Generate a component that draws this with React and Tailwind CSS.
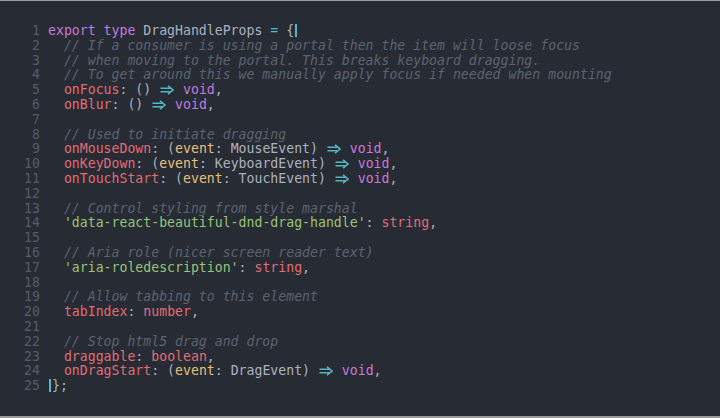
import React from "react";

const C = {
  kw: "text-[#c678dd]",
  plain: "text-[#abb2bf]",
  com: "text-[#5c6370] italic",
  prop: "text-[#e06c75]",
  str: "text-[#98c379]",
  param: "text-[#e5c07b]",
  op: "text-[#56b6c2]",
  punc: "text-[#abb2bf]",
};

const Arrow = () => (
  <span className="inline-block w-[2ch] align-[-1px]">
    <svg width="16" height="10" viewBox="0 0 16 10" className="block mx-auto" fill="none">
      <path d="M1.5 3.2H11.5M1.5 6.8H11.5" stroke="#56b6c2" strokeWidth="1.6" />
      <path d="M9 0.8L14 5L9 9.2" stroke="#56b6c2" strokeWidth="1.6" strokeLinejoin="miter" />
    </svg>
  </span>
);

const Bar = () => (
  <span className="inline-block w-[2px] h-[13px] bg-[#56b6c2] align-[-2px] mx-[1px]" />
);

const t = (cls, text) => ({ cls, text });

const lines = [
  [t("kw", "export type "), t("plain", "DragHandleProps "), t("op", "="), t("punc", " {"), "bar"],
  [t("com", "  // If a consumer is using a portal then the item will loose focus")],
  [t("com", "  // when moving to the portal. This breaks keyboard dragging.")],
  [t("com", "  // To get around this we manually apply focus if needed when mounting")],
  [t("plain", "  "), t("prop", "onFocus"), t("punc", ": () "), "arrow", t("punc", " "), t("kw", "void"), t("punc", ",")],
  [t("plain", "  "), t("prop", "onBlur"), t("punc", ": () "), "arrow", t("punc", " "), t("kw", "void"), t("punc", ",")],
  [],
  [t("com", "  // Used to initiate dragging")],
  [t("plain", "  "), t("prop", "onMouseDown"), t("punc", ": ("), t("param", "event"), t("punc", ": MouseEvent) "), "arrow", t("punc", " "), t("kw", "void"), t("punc", ",")],
  [t("plain", "  "), t("prop", "onKeyDown"), t("punc", ": ("), t("param", "event"), t("punc", ": KeyboardEvent) "), "arrow", t("punc", " "), t("kw", "void"), t("punc", ",")],
  [t("plain", "  "), t("prop", "onTouchStart"), t("punc", ": ("), t("param", "event"), t("punc", ": TouchEvent) "), "arrow", t("punc", " "), t("kw", "void"), t("punc", ",")],
  [],
  [t("com", "  // Control styling from style marshal")],
  [t("plain", "  "), t("str", "'data-react-beautiful-dnd-drag-handle'"), t("punc", ": "), t("prop", "string"), t("punc", ",")],
  [],
  [t("com", "  // Aria role (nicer screen reader text)")],
  [t("plain", "  "), t("str", "'aria-roledescription'"), t("punc", ": "), t("prop", "string"), t("punc", ",")],
  [],
  [t("com", "  // Allow tabbing to this element")],
  [t("plain", "  "), t("prop", "tabIndex"), t("punc", ": "), t("prop", "number"), t("punc", ",")],
  [],
  [t("com", "  // Stop html5 drag and drop")],
  [t("plain", "  "), t("prop", "draggable"), t("punc", ": "), t("prop", "boolean"), t("punc", ",")],
  [t("plain", "  "), t("prop", "onDragStart"), t("punc", ": ("), t("param", "event"), t("punc", ": DragEvent) "), "arrow", t("punc", " "), t("kw", "void"), t("punc", ",")],
  ["bar", t("punc", "};")],
];

export default function App() {
  return (
    <div className="w-[720px] h-[418px] bg-[#272b34] border-t border-t-[#9a9a9a] border-b-2 border-b-[#9a9a9a] overflow-hidden">
      <div
        className="pt-[23px] text-[13.2px] leading-[14.8px] whitespace-pre"
        style={{ fontFamily: '"DejaVu Sans Mono", "Liberation Mono", monospace' }}
      >
        {lines.map((toks, i) => (
          <div key={i} className="flex h-[14.8px]">
            <div className="w-[40px] text-right text-[#555c69] shrink-0">{i + 1}</div>
            <div className="pl-[8px]">
              {toks.map((tok, j) =>
                tok === "arrow" ? (
                  <Arrow key={j} />
                ) : tok === "bar" ? (
                  <Bar key={j} />
                ) : (
                  <span key={j} className={C[tok.cls]}>
                    {tok.text}
                  </span>
                )
              )}
            </div>
          </div>
        ))}
      </div>
    </div>
  );
}
